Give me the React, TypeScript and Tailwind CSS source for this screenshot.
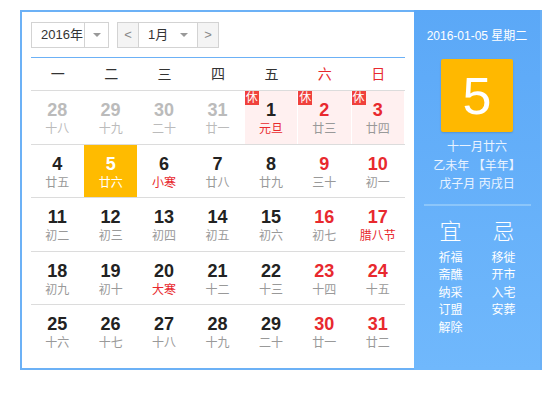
import React from 'react';

type Day = {
  n: number;
  lunar: string;
  muted?: boolean;
  redNum?: boolean;
  redLunar?: boolean;
  holiday?: boolean;
  today?: boolean;
};

const weekdays = ['一', '二', '三', '四', '五', '六', '日'];

const rows: Day[][] = [
  [
    { n: 28, lunar: '十八', muted: true },
    { n: 29, lunar: '十九', muted: true },
    { n: 30, lunar: '二十', muted: true },
    { n: 31, lunar: '廿一', muted: true },
    { n: 1, lunar: '元旦', redLunar: true, holiday: true },
    { n: 2, lunar: '廿三', redNum: true, holiday: true },
    { n: 3, lunar: '廿四', redNum: true, holiday: true },
  ],
  [
    { n: 4, lunar: '廿五' },
    { n: 5, lunar: '廿六', today: true },
    { n: 6, lunar: '小寒', redLunar: true },
    { n: 7, lunar: '廿八' },
    { n: 8, lunar: '廿九' },
    { n: 9, lunar: '三十', redNum: true },
    { n: 10, lunar: '初一', redNum: true },
  ],
  [
    { n: 11, lunar: '初二' },
    { n: 12, lunar: '初三' },
    { n: 13, lunar: '初四' },
    { n: 14, lunar: '初五' },
    { n: 15, lunar: '初六' },
    { n: 16, lunar: '初七', redNum: true },
    { n: 17, lunar: '腊八节', redNum: true, redLunar: true },
  ],
  [
    { n: 18, lunar: '初九' },
    { n: 19, lunar: '初十' },
    { n: 20, lunar: '大寒', redLunar: true },
    { n: 21, lunar: '十二' },
    { n: 22, lunar: '十三' },
    { n: 23, lunar: '十四', redNum: true },
    { n: 24, lunar: '十五', redNum: true },
  ],
  [
    { n: 25, lunar: '十六' },
    { n: 26, lunar: '十七' },
    { n: 27, lunar: '十八' },
    { n: 28, lunar: '十九' },
    { n: 29, lunar: '二十' },
    { n: 30, lunar: '廿一', redNum: true },
    { n: 31, lunar: '廿二', redNum: true },
  ],
];

const yi = ['祈福', '斋醮', '纳采', '订盟', '解除'];
const ji = ['移徙', '开市', '入宅', '安葬'];

function Caret() {
  return <span className="w-0 h-0 border-x-[4px] border-x-transparent border-t-[4px] border-t-[#999]" />;
}

function Cell({ d }: { d: Day }) {
  let bg = '';
  if (d.today) bg = 'bg-[#ffbb00]';
  else if (d.holiday) bg = 'bg-[#fff0f0]';

  let numColor = 'text-[#222]';
  if (d.muted) numColor = 'text-[#bbb]';
  else if (d.today) numColor = 'text-white';
  else if (d.redNum) numColor = 'text-[#e8292e]';

  let lunarColor = 'text-[#999]';
  if (d.muted) lunarColor = 'text-[#bbb]';
  else if (d.today) lunarColor = 'text-white';
  else if (d.redLunar) lunarColor = 'text-[#e8292e]';

  return (
    <div className={`relative flex flex-col items-center pt-[9px] border-r border-white ${bg}`}>
      {d.holiday && (
        <span className="absolute left-0 top-0 w-[14px] h-[14px] bg-[#f0413c] text-white text-[12px] leading-[14px] text-center">
          休
        </span>
      )}
      <span className={`text-[18px] leading-[20px] font-bold ${numColor}`}>{d.n}</span>
      <span className={`mt-px text-[12px] leading-[16px] ${lunarColor}`}>{d.lunar}</span>
    </div>
  );
}

export default function App() {
  return (
    <div
      className="w-[560px] h-[420px] bg-white pt-[10px] pl-[20px]"
      style={{ fontFamily: '"Liberation Sans", "Noto Sans CJK SC", sans-serif' }}
    >
      <div className="flex w-[522px] h-[360px] border-2 border-[#6cb1f6]">
        {/* calendar grid */}
        <div className="w-[392px] pl-[9px] pt-[10px]">
          <div className="flex items-center gap-[8px] text-[13px] text-[#333]">
            <div className="flex h-[26px] border border-[#d3d3d3]">
              <span className="w-[52px] pl-[9px] leading-[24px]">2016年</span>
              <span className="w-[24px] flex items-center justify-center border-l border-[#d3d3d3]">
                <Caret />
              </span>
            </div>
            <div className="flex h-[26px] border border-[#d3d3d3]">
              <span className="w-[21px] flex items-center justify-center bg-[#f4f4f4] text-[#888] border-r border-[#d3d3d3]">&lt;</span>
              <span className="w-[58px] flex items-center justify-between pl-[9px] pr-[9px]">
                1月
                <Caret />
              </span>
              <span className="w-[21px] flex items-center justify-center bg-[#f4f4f4] text-[#888] border-l border-[#d3d3d3]">&gt;</span>
            </div>
          </div>

          <div className="w-[374px] mt-[9px] border-t-[1.5px] border-[#6cb1f6]">
            <div className="grid grid-cols-7 h-[32px] items-center text-[14px]">
              {weekdays.map((w, i) => (
                <span key={w} className={`text-center ${i >= 5 ? 'text-[#e8292e]' : 'text-[#333]'}`}>
                  {w}
                </span>
              ))}
            </div>
            {rows.map((row, ri) => (
              <div key={ri} className="grid grid-cols-7 h-[53.5px] border-t border-[#dcdcdc]">
                {row.map((d, i) => (
                  <Cell key={i} d={d} />
                ))}
              </div>
            ))}
          </div>
        </div>

        {/* side panel */}
        <div className="w-[126px] -mt-[2px] -mb-[2px] flex flex-col items-center bg-gradient-to-b from-[#5ba8f7] to-[#70b8fc] text-white">
          <div className="mt-[18px] text-[12px] leading-[16px]">2016-01-05 星期二</div>
          <div className="mt-[15px] w-[72px] h-[73px] shrink-0 flex items-center justify-center rounded-[2px] bg-[#ffb800] shadow-[0_1px_2px_rgba(0,0,0,0.15)] text-[52px] leading-none">
            5
          </div>
          <div className="mt-[6px] text-[12px] leading-[18.5px] text-center text-[#e9f3ff]">
            <div>十一月廿六</div>
            <div>乙未年 【羊年】</div>
            <div>戊子月 丙戌日</div>
          </div>
          <div className="mt-[10px] w-[107px] h-[2px] bg-[#8cc6fa]" />
          <div className="mt-[14px] grid grid-cols-2 w-[106px] text-center">
            <div>
              <div className="text-[22px] leading-[24px] font-light">宜</div>
              <div className="mt-[6px] text-[12px] leading-[17.5px]">
                {yi.map((t) => (
                  <div key={t}>{t}</div>
                ))}
              </div>
            </div>
            <div>
              <div className="text-[22px] leading-[24px] font-light">忌</div>
              <div className="mt-[6px] text-[12px] leading-[17.5px]">
                {ji.map((t) => (
                  <div key={t}>{t}</div>
                ))}
              </div>
            </div>
          </div>
        </div>
      </div>
    </div>
  );
}
